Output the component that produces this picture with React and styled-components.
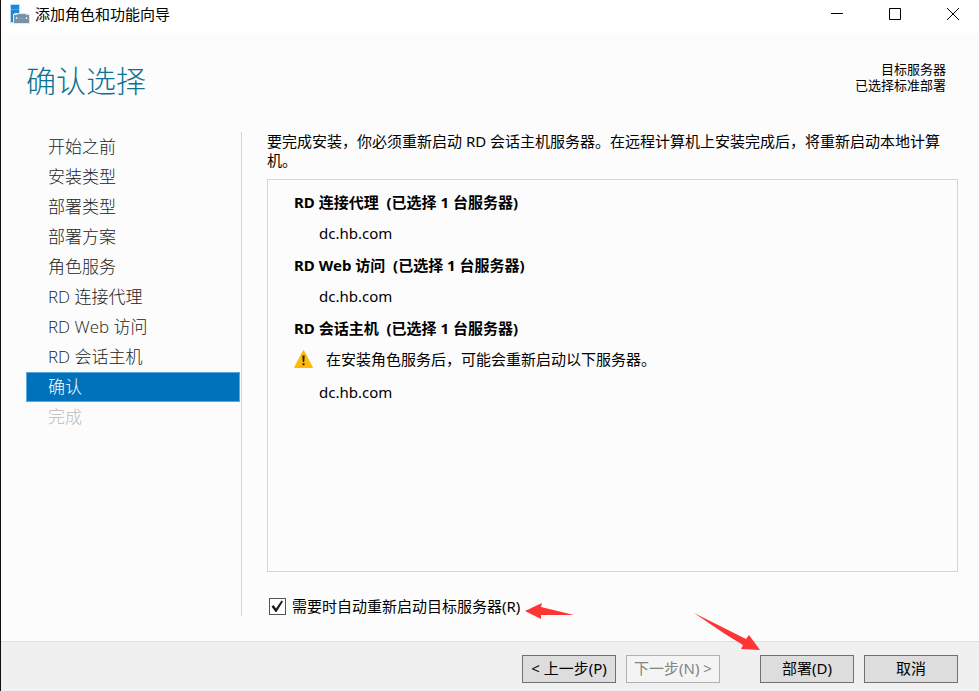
import React, { useState } from "react";
import styled, { createGlobalStyle, css } from "styled-components";

const colors = {
  text: "#000",
  navText: "#222",
  disabled: "#bbb",
  heading: "#0c7294",
  accent: "#0072bc",
  accentEdge: "#5aa9dc",
  border: "#d5d5d5",
  page: "#fcfcfc",
  footer: "#f0f0f0",
  arrow: "#fe3532",
};
const fonts = {
  ui: `"Noto Sans", "Noto Sans CJK SC", sans-serif`,
  light: `"Open Sans", "Noto Sans CJK SC", sans-serif`,
  cjk: `"Noto Sans CJK SC", sans-serif`,
  compact: `"Liberation Sans", "Noto Sans CJK SC", sans-serif`,
};
const fontSizes = { sm: "13px", md: "15px", lg: "17px", xl: "30px" };

const GlobalStyle = createGlobalStyle`
  * {
    box-sizing: border-box;
  }
  body {
    margin: 0;
    color: ${colors.text};
    font-family: ${fonts.ui};
    font-size: ${fontSizes.md};
  }
`;
const StyledWindow = styled.div`
  display: flex;
  flex-direction: column;
  min-height: 100vh;
  background-color: ${colors.page};
  border-left: 1px solid #111;
`;
const StyledTitleBar = styled.div`
  display: flex;
  align-items: flex-start;
  justify-content: space-between;
  padding-left: 9px;
  height: 33px;
  background-color: #fff;
`;
const StyledCaption = styled.div`
  display: flex;
  align-items: center;
  gap: 5px;
  height: 28px;
  line-height: 20px;
  font-family: ${fonts.cjk};
`;
const StyledWindowControls = styled.div`
  display: flex;
  padding-right: 3px;
`;
const StyledWindowButton = styled.button`
  display: flex;
  align-items: center;
  justify-content: center;
  width: 46px;
  height: 28px;
  margin-left: 12px;
  padding: 0;
  border: 0;
  background: none;
`;
const StyledHeader = styled.header`
  display: flex;
  align-items: flex-start;
  justify-content: space-between;
  padding: 26px 33px 33px 25px;
`;
const StyledHeading = styled.h1`
  margin: 0;
  color: ${colors.heading};
  font-family: ${fonts.cjk};
  font-size: ${fontSizes.xl};
  font-weight: 300;
  line-height: 40px;
`;
const StyledTarget = styled.div`
  padding-top: 3px;
  font-family: ${fonts.compact};
  font-size: ${fontSizes.sm};
  line-height: 16px;
  text-align: right;
`;
const StyledContent = styled.div`
  display: flex;
  flex: 1;
  gap: 25px;
  padding: 0 21px 25px 25px;
`;
const StyledNav = styled.nav`
  flex: none;
  width: 216px;
  padding-right: 1px;
  border-right: 1px solid ${colors.border};
`;
const StyledNavList = styled.ol`
  margin: 0;
  padding: 0;
  list-style: none;
`;
const StyledNavLink = styled.a`
  display: block;
  height: 30px;
  padding-left: 22px;
  color: ${colors.navText};
  font-family: ${fonts.light};
  font-size: ${fontSizes.lg};
  font-weight: 300;
  line-height: 30px;
  text-decoration: none;
  ${(props) =>
    props.$active &&
    css`
      color: #fff;
      background-color: ${colors.accent};
      box-shadow: inset 0 0 0 1px ${colors.accentEdge};
    `};
  ${(props) =>
    props.$disabled &&
    css`
      color: ${colors.disabled};
    `};
`;
const StyledMain = styled.main`
  display: flex;
  flex: 1;
  flex-direction: column;
  min-width: 0;
`;
const StyledDescription = styled.p`
  margin: 0 0 9px;
  padding-right: 10px;
  line-height: 19px;
`;
const StyledPanel = styled.section`
  flex: 1;
  padding: 7px 26px;
  border: 1px solid ${colors.border};
`;
const StyledGroupTitle = styled.h2`
  margin: 0;
  font-size: ${fontSizes.md};
  font-weight: 700;
  line-height: 31px;
`;
const StyledServer = styled.div`
  margin-bottom: 2px;
  padding-left: 25px;
  line-height: 30px;
`;
const StyledWarning = styled.div`
  display: flex;
  align-items: center;
  gap: 13px;
  margin-bottom: 3px;
  line-height: 30px;
`;
const StyledRestart = styled.label`
  position: relative;
  display: flex;
  align-items: center;
  align-self: flex-start;
  gap: 6px;
  margin-top: 25px;
  padding-left: 2px;
  line-height: 19px;
`;
const StyledCheck = styled.span`
  display: grid;
  width: 17px;
  height: 17px;
  > * {
    grid-area: 1 / 1;
  }
  svg {
    pointer-events: none;
  }
`;
const StyledCheckbox = styled.input`
  appearance: none;
  width: 17px;
  height: 17px;
  margin: 0;
  border: 1px solid #555;
  background-color: #fff;
  &:not(:checked) + svg {
    display: none;
  }
`;
const StyledFooter = styled.footer`
  display: flex;
  justify-content: flex-end;
  gap: 10px;
  padding: 13px 21px 8px;
  background-color: ${colors.footer};
  border-top: 1px solid #dfdfdf;
`;
const StyledButton = styled.button`
  width: 94px;
  height: 28px;
  padding: 0 0 2px;
  color: ${colors.text};
  font-family: ${fonts.ui};
  font-size: ${fontSizes.md};
  line-height: 20px;
  white-space: nowrap;
  background-color: #ddd;
  border: 1px solid #707070;
  &:disabled {
    color: #838383;
    background-color: #f4f4f4;
    border-color: #adb2b5;
  }
`;
const StyledDeploy = styled.div`
  position: relative;
  margin-left: 30px;
`;
const StyledRestartArrow = styled.svg`
  position: absolute;
  left: 100%;
  top: 6px;
  margin-left: 5px;
`;
const StyledDeployArrow = styled.svg`
  position: absolute;
  left: -66px;
  top: -42px;
  pointer-events: none;
`;

const steps = [
  "开始之前",
  "安装类型",
  "部署类型",
  "部署方案",
  "角色服务",
  "RD 连接代理",
  "RD Web 访问",
  "RD 会话主机",
  "确认",
  "完成",
];
const groups = [
  { name: "RD 连接代理", server: "dc.hb.com" },
  { name: "RD Web 访问", server: "dc.hb.com" },
  {
    name: "RD 会话主机",
    server: "dc.hb.com",
    warning: "在安装角色服务后，可能会重新启动以下服务器。",
  },
];

const ServerIcon = () => (
  <svg width="20" height="20" viewBox="0 0 20 20" aria-hidden="true">
    <path d="M0 0h10v9H7v10H0z" fill="#b9dcf3" />
    <path d="M1 1h8v8H4v9H1z" fill="#1b87d6" />
    <path d="M1 5.500h8" stroke="#4ba5e4" />
    <path d="M6 9h12v1h2v10H3V10h3z" fill="#dce8ef" />
    <path d="M4 11h15v8H4z" fill="#7893a7" />
    <path d="M7.500 11.500v-1h8v1" fill="none" stroke="#7893a7" />
    <path d="M4 14.500h15" stroke="#8ba3b4" />
    <path d="M6 13h1v2H6zM16 13h1v2h-1z" fill="#e6eef3" />
  </svg>
);
const WarningIcon = () => (
  <svg width="19" height="18" viewBox="0 0 19 18" aria-hidden="true">
    <path d="M9.500 0.500 18.500 17.500H0.500z" fill="#ffba08" stroke="#ffba08" strokeLinejoin="round" />
    <path d="M8.300 5.500h2.400l-.5 6.500H8.800zM8.500 13.200h2v2h-2z" fill="#222" />
  </svg>
);

const App = () => {
  const [restart, setRestart] = useState(true);
  return (
    <>
      <GlobalStyle />
      <StyledWindow lang="zh-CN">
        <StyledTitleBar>
          <StyledCaption>
            <ServerIcon />
            添加角色和功能向导
          </StyledCaption>
          <StyledWindowControls>
            <StyledWindowButton aria-label="最小化">
              <svg width="12" height="12" stroke="#000">
                <path d="M0 5.500h12" />
              </svg>
            </StyledWindowButton>
            <StyledWindowButton aria-label="最大化">
              <svg width="12" height="12" stroke="#000" fill="none">
                <path d="M.5.5h11v11H.5z" />
              </svg>
            </StyledWindowButton>
            <StyledWindowButton aria-label="关闭">
              <svg width="12" height="12" stroke="#000">
                <path d="M0 0 12 12M12 0 0 12" />
              </svg>
            </StyledWindowButton>
          </StyledWindowControls>
        </StyledTitleBar>
        <StyledHeader>
          <StyledHeading>确认选择</StyledHeading>
          <StyledTarget>
            目标服务器
            <br />
            已选择标准部署
          </StyledTarget>
        </StyledHeader>
        <StyledContent>
          <StyledNav>
            <StyledNavList>
              {steps.map((step) => (
                <li key={step}>
                  <StyledNavLink
                    href="#step"
                    $active={step === "确认"}
                    $disabled={step === "完成"}
                  >
                    {step}
                  </StyledNavLink>
                </li>
              ))}
            </StyledNavList>
          </StyledNav>
          <StyledMain>
            <StyledDescription>
              要完成安装，你必须重新启动 RD
              会话主机服务器。在远程计算机上安装完成后，将重新启动本地计算机。
            </StyledDescription>
            <StyledPanel>
              {groups.map(({ name, server, warning }) => (
                <div key={name}>
                  <StyledGroupTitle>
                    {name}&nbsp; (已选择 1 台服务器)
                  </StyledGroupTitle>
                  {warning && (
                    <StyledWarning>
                      <WarningIcon />
                      {warning}
                    </StyledWarning>
                  )}
                  <StyledServer>{server}</StyledServer>
                </div>
              ))}
            </StyledPanel>
            <StyledRestart>
              <StyledCheck>
                <StyledCheckbox
                  type="checkbox"
                  checked={restart}
                  onChange={(e) => setRestart(e.target.checked)}
                />
                <svg width="17" height="17" viewBox="0 0 17 17">
                  <path d="M2.500 8.500 4.500 7 7 10.500 12.500 2.500 14 3.500 7.500 14H6.500z" fill="#1a1a1a" />
                </svg>
              </StyledCheck>
              需要时自动重新启动目标服务器(R)
              <StyledRestartArrow width="50" height="17" fill={colors.arrow}>
                <path d="M0 8 17 0 16 4 49 12H16V16z" />
              </StyledRestartArrow>
            </StyledRestart>
          </StyledMain>
        </StyledContent>
        <StyledFooter>
          <StyledButton>&lt; 上一步(P)</StyledButton>
          <StyledButton disabled>下一步(N) &gt;</StyledButton>
          <StyledDeploy>
            <StyledButton>部署(D)</StyledButton>
            <StyledDeployArrow width="67" height="38" fill={colors.arrow}>
              <path d="M0 0 52 26 55 22 66 37 47 36 49 32 31 21z" />
            </StyledDeployArrow>
          </StyledDeploy>
          <StyledButton>取消</StyledButton>
        </StyledFooter>
      </StyledWindow>
    </>
  );
};
export default App;
